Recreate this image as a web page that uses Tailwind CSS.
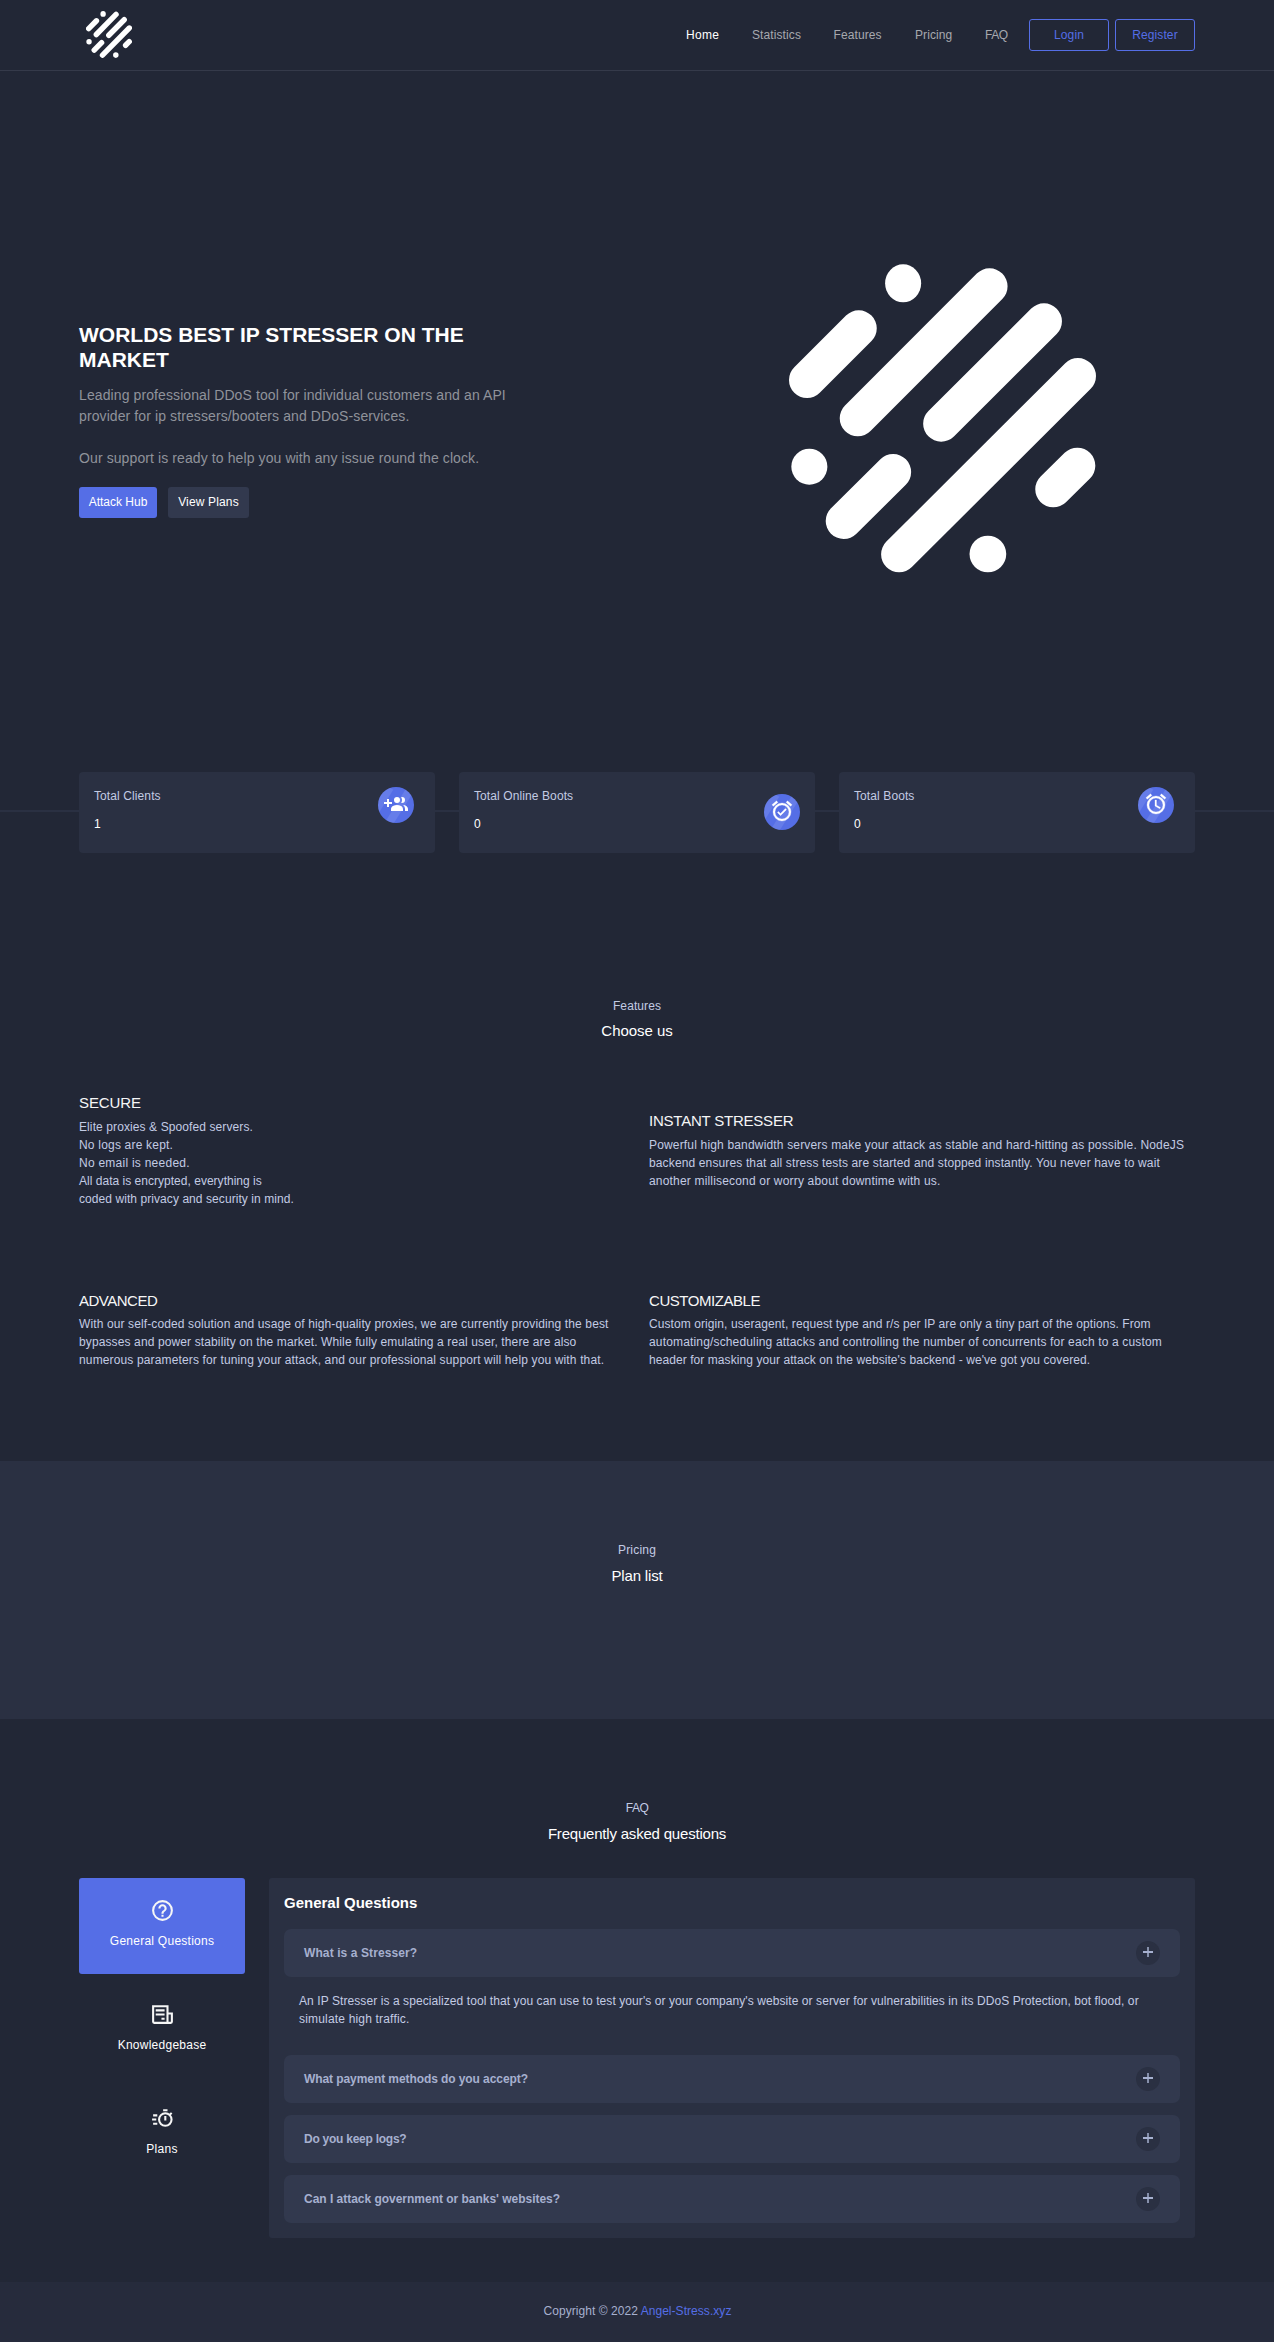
<!DOCTYPE html>
<html lang="en">
<head>
<meta charset="utf-8">
<title>Angel-Stress.xyz</title>
<script src="https://cdn.jsdelivr.net/npm/@tailwindcss/browser@4"></script>
</head>
<body class="bg-[#222736] font-['Liberation_Sans',Arial,sans-serif] text-xs leading-[18px] tracking-[0.1px] text-[#c3cbe4]">

<svg class="hidden">
  <symbol id="brand" viewBox="87 71 920 927" preserveAspectRatio="none">
    <g fill="none" stroke="#fff" stroke-width="108" stroke-linecap="round">
      <path d="M296 264L141 419M688 138L293 534M851 243L543 550M953 407L417 942M399 695L251 842M951 676L879 747"/>
    </g>
    <ellipse cx="429" cy="129" rx="54" ry="57" fill="#fff"/>
    <circle cx="148" cy="679" r="54" fill="#fff"/>
    <circle cx="683" cy="941" r="55" fill="#fff"/>
  </symbol>
  <symbol id="plus" viewBox="0 0 10 10">
    <path d="M0 5H10" stroke="#a6b0cf" stroke-width="2"/><path d="M5 0V10" stroke="#a6b0cf" stroke-width="1.5"/>
  </symbol>
</svg>

<header class="h-[71px] border-b border-[#353a4a]">
  <div class="mx-auto flex h-[70px] w-[1116px] items-center">
    <svg class="mb-px ml-[7px] h-[47px] w-[46px]"><use href="#brand"/></svg>
    <nav class="ml-auto flex gap-8 pr-[22px] whitespace-nowrap text-[#a7a9af]">
      <a class="w-[34px] tracking-[0.3px] text-white">Home</a><a class="w-[49.5px]">Statistics</a><a class="w-[49.5px]">Features</a><a class="w-[38px]">Pricing</a><a class="w-[22px] tracking-[-0.5px]">FAQ</a>
    </nav>
    <div class="flex gap-1.5 text-center text-[#556ee6]">
      <a class="h-8 w-20 rounded-[3px] border border-[#556ee6] leading-[30px]">Login</a>
      <a class="h-8 w-20 rounded-[3px] border border-[#556ee6] leading-[30px]">Register</a>
    </div>
  </div>
</header>

<section class="h-[741px] border-b-2 border-[#2a3042]">
  <div class="mx-auto flex w-[1116px] justify-between pt-[193px]">
    <div class="w-[440px] pt-[58px]">
      <h1 class="text-[21px] leading-[25px] font-bold tracking-normal text-white">WORLDS BEST IP STRESSER ON THE MARKET</h1>
      <p class="mt-[13px] text-sm leading-[21px] tracking-[0.1px] text-[#90939b]">Leading professional DDoS tool for individual customers and an API provider for ip stressers/booters and DDoS-services.<br><br>Our support is ready to help you with any issue round the clock.</p>
      <div class="mt-[18px] flex gap-[11px] text-center leading-[31px] text-white">
        <a class="h-[31px] w-[78px] rounded-[3px] bg-[#556ee6] tracking-normal">Attack Hub</a>
        <a class="h-[31px] w-[81px] rounded-[3px] bg-[#32394e] tracking-[0.15px]">View Plans</a>
      </div>
    </div>
    <svg class="mr-[99px] h-[309px] w-[307px]"><use href="#brand"/></svg>
  </div>
</section>

<section class="relative mx-auto -mt-10 grid w-[1116px] grid-cols-3 gap-6">
  <div class="flex h-[81px] justify-between rounded bg-[#2a3042] py-[15px] pr-[21px] pl-[15px]">
    <div><p>Total Clients</p><p class="mt-2.5 text-white">1</p></div>
    <div class="relative flex size-9 justify-center overflow-hidden rounded-full bg-[#556ee6] pt-[5px]">
      <i class="absolute -top-[5px] left-4 h-[54px] w-2 rotate-[32deg] bg-white/10"></i>
      <i class="absolute -top-[5px] -left-3 h-[54px] w-3.5 rotate-[32deg] bg-white/10"></i>
      <svg class="relative size-6" viewBox="0 0 24 24" fill="#fff"><path d="M19 17V19H7V17S7 13 13 13 19 17 19 17M16 8A3 3 0 1 0 13 11A3 3 0 0 0 16 8M19.2 13.06A5.6 5.6 0 0 1 21 17V19H24V17S24 13.55 19.2 13.06M18 5A2.91 2.91 0 0 0 17.11 5.14A5 5 0 0 1 17.11 10.86A2.91 2.91 0 0 0 18 11A3 3 0 0 0 18 5M8 10H5V7H3V10H0V12H3V15H5V12H8Z"/></svg>
    </div>
  </div>
  <div class="flex h-[81px] justify-between rounded bg-[#2a3042] p-[15px]">
    <div><p>Total Online Boots</p><p class="mt-2.5 text-white">0</p></div>
    <div class="relative mt-[7px] flex size-9 justify-center overflow-hidden rounded-full bg-[#556ee6] pt-[5px]">
      <i class="absolute -top-[5px] left-4 h-[54px] w-2 rotate-[32deg] bg-white/10"></i>
      <i class="absolute -top-[5px] -left-3 h-[54px] w-3.5 rotate-[32deg] bg-white/10"></i>
      <svg class="relative size-6" viewBox="0 0 24 24" fill="#fff" stroke="#fff" stroke-width=".3" fill-rule="evenodd"><path d="M10.54 14.53L8.41 12.4L7.35 13.46L10.53 16.64L16.53 10.64L15.47 9.58L10.54 14.53M12 20A7 7 0 0 1 5 13A7 7 0 0 1 12 6A7 7 0 0 1 19 13A7 7 0 0 1 12 20M12 4A9 9 0 0 0 3 13A9 9 0 0 0 12 22A9 9 0 0 0 21 13A9 9 0 0 0 12 4M7.88 3.39L6.6 1.86L2 5.71L3.29 7.24L7.88 3.39M22 5.72L17.4 1.86L16.11 3.39L20.71 7.25L22 5.72Z"/></svg>
    </div>
  </div>
  <div class="flex h-[81px] justify-between rounded bg-[#2a3042] py-[15px] pr-[21px] pl-[15px]">
    <div><p>Total Boots</p><p class="mt-2.5 text-white">0</p></div>
    <div class="relative flex size-9 justify-center overflow-hidden rounded-full bg-[#556ee6] pt-[5px]">
      <i class="absolute -top-[5px] left-4 h-[54px] w-2 rotate-[32deg] bg-white/10"></i>
      <i class="absolute -top-[5px] -left-3 h-[54px] w-3.5 rotate-[32deg] bg-white/10"></i>
      <svg class="relative size-6" viewBox="0 0 24 24" fill="#fff" stroke="#fff" stroke-width=".3" fill-rule="evenodd"><path d="M12 20A7 7 0 0 1 5 13A7 7 0 0 1 12 6A7 7 0 0 1 19 13A7 7 0 0 1 12 20M12 4A9 9 0 0 0 3 13A9 9 0 0 0 12 22A9 9 0 0 0 21 13A9 9 0 0 0 12 4M12.5 8H11V14L15.75 16.85L16.5 15.62L12.5 13.25V8M7.88 3.39L6.6 1.86L2 5.71L3.29 7.24L7.88 3.39M22 5.72L17.4 1.86L16.11 3.39L20.71 7.25L22 5.72Z"/></svg>
    </div>
  </div>
</section>

<section class="mx-auto h-[608px] w-[1116px] pt-36">
  <div class="text-center">
    <p>Features</p>
    <h2 class="mt-[7px] text-[15px] leading-[18px] tracking-[-0.05px] text-white">Choose us</h2>
  </div>
  <div class="mt-[54px] grid grid-cols-2 items-center gap-x-6">
    <div>
      <h3 class="text-[15px] leading-[18px] tracking-[-0.1px] text-[#f6f6f6]">SECURE</h3>
      <p class="mt-1.5">Elite proxies &amp; Spoofed servers.<br><span class="tracking-[0.2px]">No logs are kept.</span><br><span class="tracking-[0.25px]">No email is needed.</span><br><span class="tracking-[0.02px]">All data is encrypted, everything is</span><br><span class="tracking-[0.07px]">coded with privacy and security in mind.</span></p>
    </div>
    <div>
      <h3 class="text-[15px] leading-[18px] tracking-[-0.22px] text-[#f6f6f6]">INSTANT STRESSER</h3>
      <p class="mt-1.5 whitespace-nowrap"><span class="tracking-[0.17px]">Powerful high bandwidth servers make your attack as stable and hard-hitting as possible. NodeJS</span><br><span class="tracking-[0.135px]">backend ensures that all stress tests are started and stopped instantly. You never have to wait</span><br><span class="tracking-[0.18px]">another millisecond or worry about downtime with us.</span></p>
    </div>
  </div>
  <div class="mt-[84px] grid grid-cols-2 items-center gap-x-6">
    <div>
      <h3 class="text-[15px] leading-[18px] tracking-[-0.5px] text-[#f6f6f6]">ADVANCED</h3>
      <p class="mt-[5px] whitespace-nowrap"><span class="tracking-[0.12px]">With our self-coded solution and usage of high-quality proxies, we are currently providing the best</span><br><span class="tracking-[0.12px]">bypasses and power stability on the market. While fully emulating a real user, there are also</span><br><span class="tracking-[0.14px]">numerous parameters for tuning your attack, and our professional support will help you with that.</span></p>
    </div>
    <div>
      <h3 class="text-[15px] leading-[18px] tracking-[-0.45px] text-[#f6f6f6]">CUSTOMIZABLE</h3>
      <p class="mt-[5px] whitespace-nowrap"><span class="tracking-[0.08px]">Custom origin, useragent, request type and r/s per IP are only a tiny part of the options. From</span><br><span class="tracking-[0.16px]">automating/scheduling attacks and controlling the number of concurrents for each to a custom</span><br><span class="tracking-[0.07px]">header for masking your attack on the website's backend - we've got you covered.</span></p>
    </div>
  </div>
</section>

<section class="h-[258px] bg-[#2a3042] pt-20 text-center">
  <p class="tracking-[0.2px]">Pricing</p>
  <h2 class="mt-2 text-[15px] leading-[18px] tracking-[-0.15px] text-white">Plan list</h2>
</section>

<section class="mx-auto w-[1116px] pt-20 pb-11">
  <div class="text-center">
    <p class="tracking-[-0.5px]">FAQ</p>
    <h2 class="mt-2 text-[15px] leading-[18px] tracking-[-0.2px] text-white">Frequently asked questions</h2>
  </div>
  <div class="mt-[35px] flex gap-6">
    <div class="flex w-[166px] flex-col gap-2 text-center tracking-[0.25px] text-white">
      <a class="flex h-24 flex-col items-center rounded-[3px] bg-[#556ee6] pt-5">
        <svg class="size-[25px]" viewBox="0 0 24 24" fill="#f6f6f6"><path d="M11 18H13V16H11V18M12 2A10 10 0 1 0 22 12A10 10 0 0 0 12 2M12 20A8 8 0 1 1 20 12A8 8 0 0 1 12 20M12 6A4 4 0 0 0 8 10H10A2 2 0 1 1 14 10C14 12 11 11.75 11 15H13C13 12.75 16 12.5 16 10A4 4 0 0 0 12 6Z"/></svg>
        <span class="mt-[9px]">General Questions</span>
      </a>
      <a class="flex h-24 flex-col items-center pt-5">
        <svg class="size-[25px]" viewBox="0 0 24 24" fill="none" stroke="#f6f6f6" stroke-width="2"><path d="M3 4H16.8V20H4a1 1 0 0 1-1-1ZM17 11H21V19a1 1 0 0 1-1 1H17M5.5 8H14M5.5 12H14M11 16H14"/></svg>
        <span class="mt-[9px]">Knowledgebase</span>
      </a>
      <a class="flex h-24 flex-col items-center pt-5">
        <svg class="size-[25px]" viewBox="0 0 24 24" fill="none" stroke="#f6f6f6" stroke-width="2"><circle cx="14.7" cy="13" r="6"/><path d="M12.6 4H16.8M18.8 8.6L20.8 6.6M14.7 9.5V14M3 9H7M2 13H6M3 17H7"/></svg>
        <span class="mt-[9px]">Plans</span>
      </a>
    </div>
    <div class="h-[360px] flex-1 rounded-[3px] bg-[#2a3042] px-[15px] pt-4">
      <h3 class="text-[15px] leading-[18px] font-bold tracking-normal text-white">General Questions</h3>
      <div class="mt-[17px] flex h-12 items-center justify-between rounded-[7px] bg-[#32394e] px-5 font-bold text-[#a6b0cf]">
        <span>What is a Stresser?</span>
        <span class="flex size-6 justify-center rounded-full bg-[#2a3042] pt-1.5"><svg class="size-2.5"><use href="#plus"/></svg></span>
      </div>
      <p class="h-[78px] px-[15px] pt-[15px] whitespace-nowrap"><span class="tracking-[0.08px]">An IP Stresser is a specialized tool that you can use to test your's or your company's website or server for vulnerabilities in its DDoS Protection, bot flood, or</span><br><span class="tracking-[0.18px]">simulate high traffic.</span></p>
      <div class="flex h-12 items-center justify-between rounded-[7px] bg-[#32394e] px-5 font-bold text-[#a6b0cf]">
        <span class="tracking-[-0.08px]">What payment methods do you accept?</span>
        <span class="flex size-6 justify-center rounded-full bg-[#2a3042] pt-1.5"><svg class="size-2.5"><use href="#plus"/></svg></span>
      </div>
      <div class="mt-3 flex h-12 items-center justify-between rounded-[7px] bg-[#32394e] px-5 font-bold text-[#a6b0cf]">
        <span class="tracking-[-0.25px]">Do you keep logs?</span>
        <span class="flex size-6 justify-center rounded-full bg-[#2a3042] pt-1.5"><svg class="size-2.5"><use href="#plus"/></svg></span>
      </div>
      <div class="mt-3 flex h-12 items-center justify-between rounded-[7px] bg-[#32394e] px-5 font-bold text-[#a6b0cf]">
        <span class="tracking-[-0.02px]">Can I attack government or banks' websites?</span>
        <span class="flex size-6 justify-center rounded-full bg-[#2a3042] pt-1.5"><svg class="size-2.5"><use href="#plus"/></svg></span>
      </div>
    </div>
  </div>
</section>

<footer class="h-[60px] bg-[#262b3c] pt-5 pl-px text-center tracking-[0.05px] text-[#a6b0cf]">Copyright © 2022 <a class="text-[#556ee6]">Angel-Stress.xyz</a></footer>
</body>
</html>
